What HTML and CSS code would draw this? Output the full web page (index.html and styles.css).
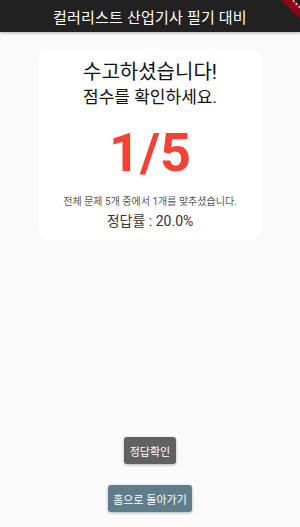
FILE: index.html
```html
<!DOCTYPE html>
<html lang="ko">
<head>
    <meta charset="UTF-8">
    <meta name="viewport" content="width=device-width, initial-scale=1.0">
    <title>컬러리스트 산업기사 필기 대비</title>
    <link rel="stylesheet" href="styles.css">
</head>
<body>
    <header class="app-bar">
        <h1>컬러리스트 산업기사 필기 대비</h1>
        <div class="debug-banner"></div>
    </header>

    <main class="page">
        <div class="card">
            <div class="title">수고하셨습니다!</div>
            <div class="subtitle">점수를 확인하세요.</div>
            <div class="score">1/5</div>
            <div class="summary">전체 문제 5개 중에서 1개를 맞추셨습니다.</div>
            <div class="rate">정답률 : 20.0%</div>
        </div>

        <div class="actions">
            <button class="btn btn-answer">정답확인</button>
            <button class="btn btn-home">홈으로 돌아가기</button>
        </div>
    </main>
</body>
</html>
```

FILE: styles.css
```css
* {
    margin: 0;
    padding: 0;
    box-sizing: border-box;
    font-family: Roboto, 'Noto Sans CJK KR', sans-serif;
}

body {
    width: 300px;
    height: 527px;
    overflow: hidden;
    background: #fafafa;
    display: flex;
    flex-direction: column;
}

.app-bar {
    position: relative;
    height: 32px;
    background: #212121;
    display: flex;
    align-items: center;
    justify-content: center;
    box-shadow: 0 1px 3px rgba(0, 0, 0, 0.3);
    overflow: hidden;
}

.app-bar h1 {
    color: #fff;
    font-size: 15px;
    font-weight: 400;
    letter-spacing: 0.2px;
}

/* flutter debug ribbon */
.debug-banner {
    position: absolute;
    top: 2px;
    right: -22px;
    width: 56px;
    height: 9px;
    transform: rotate(45deg);
    background: rgba(170, 0, 20, 0.8);
    border-top: 2px dotted rgba(255, 255, 255, 0.7);
}

.page {
    flex: 1;
    display: flex;
    flex-direction: column;
    align-items: center;
    padding-top: 17px;
}

.card {
    width: 224px;
    height: 191px;
    background: #fff;
    border-radius: 12px;
    display: flex;
    flex-direction: column;
    align-items: center;
    padding-top: 10px;
}

.title {
    font-size: 20px;
    color: #111;
    line-height: 26px;
}

.subtitle {
    font-size: 17px;
    color: #111;
    line-height: 24px;
}

.score {
    font-size: 54px;
    font-weight: bold;
    color: #f44336;
    line-height: 60px;
    margin-top: 14px;
}

.summary {
    font-size: 10px;
    color: #555;
    margin-top: 12px;
    line-height: 14px;
}

.rate {
    font-size: 14px;
    color: #333;
    line-height: 20px;
    margin-top: 2px;
}

.actions {
    margin-top: auto;
    margin-bottom: 15px;
    display: flex;
    flex-direction: column;
    align-items: center;
    gap: 21px;
}

.btn {
    border: none;
    border-radius: 3px;
    color: #fff;
    font-size: 11px;
    height: 27px;
    padding: 0;
    white-space: nowrap;
    box-shadow: 0 1px 3px rgba(0, 0, 0, 0.3);
}

.btn-answer {
    width: 52px;
    background: #616161;
}

.btn-home {
    width: 84px;
    background: #607d8b;
}
```
